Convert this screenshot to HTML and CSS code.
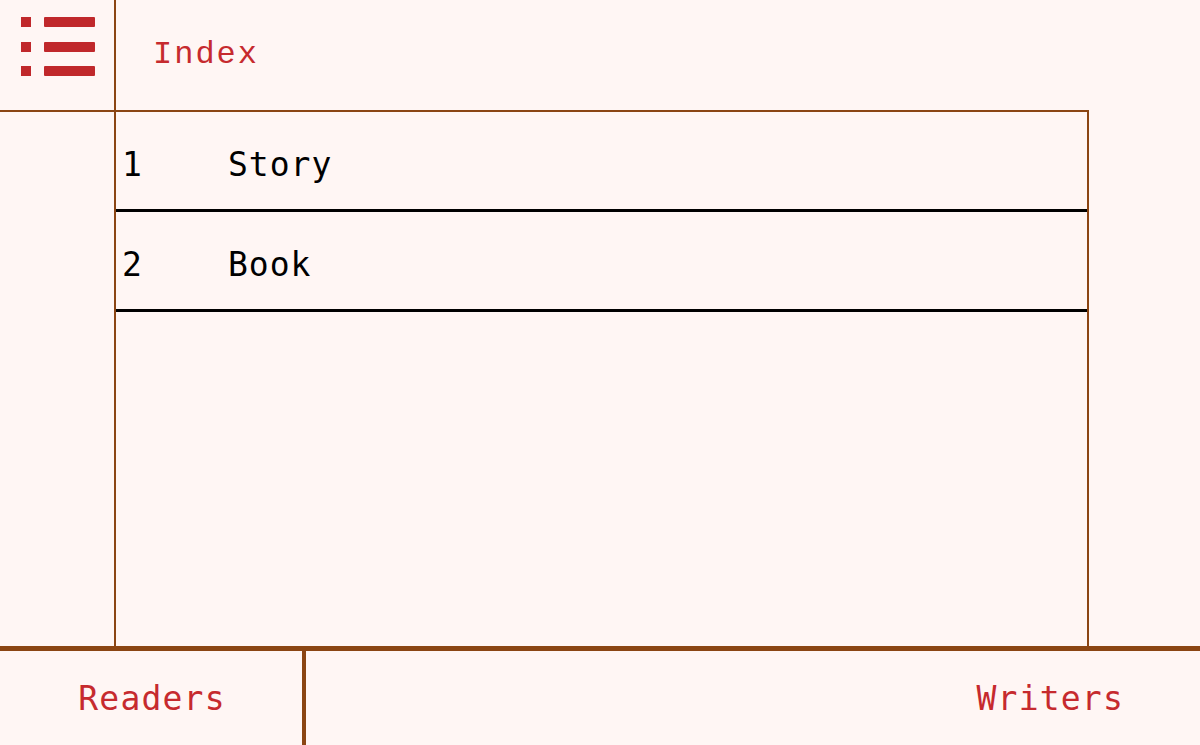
FILE: index.html
```html
<!DOCTYPE html>
<html lang="en">
<head>
<meta charset="utf-8">
<title>Index</title>
<link rel="stylesheet" href="styles.css">
</head>
<body>
<div class="app">
  <div class="top">
    <div class="menu-cell">
      <svg class="menu-icon" width="76" height="62" viewBox="0 0 76 62">
        <rect x="0" y="0" width="10" height="10"/>
        <rect x="0" y="25" width="10" height="10"/>
        <rect x="0" y="49" width="10" height="10"/>
        <rect x="23" y="0" width="51" height="10" rx="1"/>
        <rect x="23" y="25" width="51" height="10" rx="1"/>
        <rect x="23" y="49" width="51" height="10" rx="1"/>
      </svg>
    </div>
    <div class="title-cell"><span class="title">Index</span></div>
    <div class="sidebar"></div>
    <div class="main">
      <div class="list">
        <div class="row"><span class="num">1</span><span class="name">Story</span></div>
        <div class="row"><span class="num">2</span><span class="name">Book</span></div>
      </div>
    </div>
  </div>
  <div class="footer">
    <div class="foot-left">Readers</div>
    <div class="foot-right">Writers</div>
  </div>
</div>
</body>
</html>
```
FILE: styles.css
```css
html, body {
  margin: 0;
  padding: 0;
  background: #fff6f4;
}
body {
  font-family: "DejaVu Sans Mono", monospace;
}
.app {
  width: 1200px;
  height: 745px;
  display: flex;
  flex-direction: column;
}
.top {
  flex: 1;
  display: grid;
  grid-template-columns: 116px 1fr;
  grid-template-rows: 112px 1fr;
}
.menu-cell {
  border-right: 2px solid #8b4513;
  border-bottom: 2px solid #8b4513;
  display: flex;
  align-items: flex-start;
  padding: 17px 0 0 21px;
}
.menu-icon {
  fill: #c0282b;
  display: block;
}
.title-cell {
  display: flex;
  align-items: center;
  padding: 0 0 4px 37px;
}
.title {
  color: #c62a2e;
  font-family: "Liberation Mono", monospace;
  font-size: 32px;
  letter-spacing: 2px;
}
.sidebar {
  border-right: 2px solid #8b4513;
}
.main {
  display: flex;
  margin-top: -2px;
}
.list {
  width: 971px;
  border-top: 2px solid #8b4513;
  border-right: 2px solid #8b4513;
}
.row {
  box-sizing: border-box;
  height: 100px;
  padding-top: 8px;
  border-bottom: 3px solid #000;
  display: flex;
  align-items: center;
  font-size: 33px;
  letter-spacing: 1px;
  color: #000;
}
.num {
  width: 106px;
  padding-left: 6px;
}
.footer {
  height: 94px;
  border-top: 5px solid #8b4513;
  display: flex;
  font-size: 33px;
  letter-spacing: 1.2px;
  color: #c62a2e;
}
.foot-left {
  width: 300px;
  border-right: 4px solid #8b4513;
  display: flex;
  align-items: center;
  justify-content: center;
  padding-left: 2px;
}
.foot-right {
  flex: 1;
  display: flex;
  align-items: center;
  justify-content: flex-end;
  padding-right: 76px;
}
```
